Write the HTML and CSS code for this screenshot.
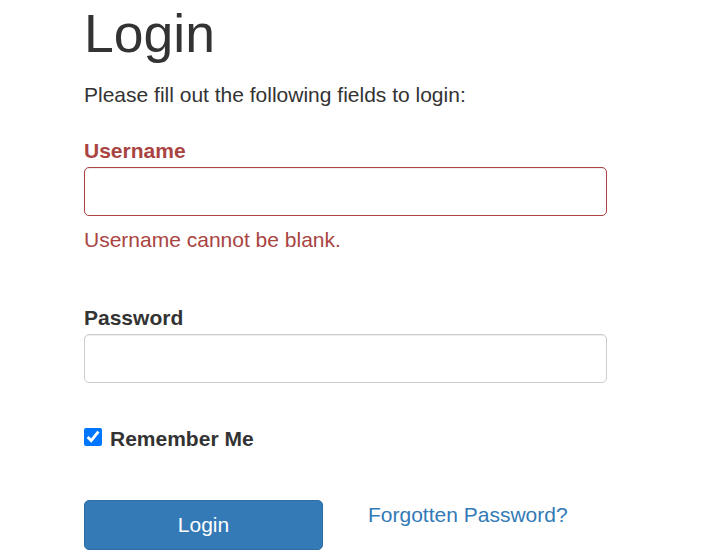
FILE: index.html
```html
<!DOCTYPE html>
<html lang="en">
<head>
<meta charset="utf-8">
<title>Login</title>
<link rel="stylesheet" href="styles.css">
</head>
<body>
<div class="site-login">
  <h1 class="title">Login</h1>
  <p class="intro">Please fill out the following fields to login:</p>
  <form class="login-form">
    <div class="form-group has-error">
      <label class="control-label" for="username">Username</label>
      <input class="form-control" id="username" type="text">
      <div class="help-block">Username cannot be blank.</div>
    </div>
    <div class="form-group pw-group">
      <label class="control-label" for="password">Password</label>
      <input class="form-control" id="password" type="password">
    </div>
    <div class="checkbox-row">
      <input class="check" id="remember" type="checkbox" checked>
      <label class="check-label" for="remember">Remember Me</label>
    </div>
    <div class="actions">
      <button class="btn-primary" type="button">Login</button>
      <a class="forgot" href="#">Forgotten Password?</a>
    </div>
  </form>
</div>
</body>
</html>
```
FILE: styles.css
```css
html, body {
  margin: 0;
  padding: 0;
  background: #fff;
}
body {
  font-family: "Liberation Sans", Arial, sans-serif;
  font-size: 21px;
  line-height: 28px;
  color: #333;
}
.site-login {
  padding-left: 84px;
  width: 523px;
}
.title {
  margin: 6px 0 0;
  font-size: 53.5px;
  line-height: 55px;
  font-weight: normal;
}
.intro {
  margin: 20px 0 0;
}
.login-form {
  margin-top: 27.5px;
}
.form-group {
  display: flex;
  flex-direction: column;
}
.control-label {
  font-weight: bold;
  margin-bottom: 2px;
}
.has-error .control-label,
.has-error .help-block {
  color: #a94442;
}
.form-control {
  box-sizing: border-box;
  height: 49.5px;
  width: 523px;
  margin: 0;
  padding: 8px 17px;
  font: inherit;
  border: 1px solid #ccc;
  border-radius: 5px;
  box-shadow: inset 0 1px 1px rgba(0,0,0,.075);
  background: #fff;
}
.has-error .form-control {
  border-color: #a94442;
}
.help-block {
  margin-top: 10px;
}
.pw-group {
  margin-top: 49.5px;
}
.checkbox-row {
  display: flex;
  align-items: flex-start;
  margin-top: 42px;
}
.check {
  width: 18px;
  height: 18px;
  margin: 2.5px 8px 0 0;
  accent-color: #0075ff;
}
.check-label {
  font-weight: bold;
}
.actions {
  display: flex;
  align-items: flex-start;
  gap: 45px;
  margin-top: 47px;
}
.btn-primary {
  box-sizing: border-box;
  width: 239px;
  height: 50px;
  font: inherit;
  color: #fff;
  background: #337ab7;
  border: 1px solid #2e6da4;
  border-radius: 5px;
  padding: 0;
}
.forgot {
  color: #337ab7;
  text-decoration: none;
  margin-top: 0.5px;
}
```
